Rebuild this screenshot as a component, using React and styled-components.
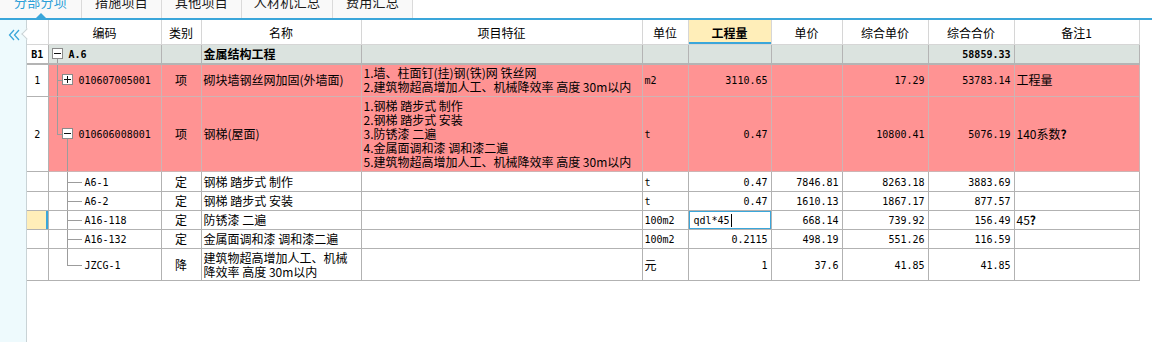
import React from "react"
import styled, { createGlobalStyle, css } from "styled-components"

const GlobalStyle = createGlobalStyle`
  html, body {
    margin: 0;
    padding: 0;
    background: #fff;
  }
  body {
    font-family: "Noto Sans CJK SC", "DejaVu Sans", sans-serif;
    font-size: 12px;
    color: #000;
  }
`

const colors = {
  blue: "#3aa6da",
  pane: "#eefafd",
  header: "#ffffff",
  headerLine: "#d6d6d6",
  group: "#dbe3df",
  groupLine: "#b4b4b4",
  red: "#ff9393",
  redLine: "#cdb4b4",
  plainLine: "#b2b2b2",
  current: "#ffeeb9",
  tree: "#9c9c9c",
}

const Page = styled.div`
  width: 1152px;
  height: 342px;
  display: flex;
  flex-direction: column;
  overflow: hidden;
`

const TabBar = styled.div`
  display: flex;
  height: 18px;
  flex-shrink: 0;
  border-bottom: 2px solid ${colors.blue};
  overflow: hidden;
`

const Tab = styled.div`
  position: relative;
  box-sizing: border-box;
  width: ${(p) => p.$w}px;
  border-right: 1px solid #dadada;
  background: #f9f9f9;
  display: flex;
  justify-content: center;
  font-size: 13px;
  line-height: 13px;
  color: ${(p) => (p.$active ? "#2b9fd8" : "#1a1a1a")};

  span {
    margin-top: -5px;
    letter-spacing: 0.3px;
  }

  ${(p) =>
    p.$active &&
    css`
      &::after {
        content: "";
        position: absolute;
        left: 50%;
        bottom: 0;
        transform: translateX(-50%);
        border-left: 5px solid transparent;
        border-right: 5px solid transparent;
        border-bottom: 5px solid ${colors.blue};
      }
    `}
`

const Main = styled.div`
  flex: 1;
  display: flex;
  min-height: 0;
`

const SidePane = styled.div`
  position: relative;
  width: 27px;
  flex-shrink: 0;
  background: ${colors.pane};
  border-right: 1px solid #c9d3d6;
  padding: 7px 0 0 8px;
  box-sizing: border-box;

  &::after {
    content: "";
    position: absolute;
    right: -5px;
    top: 10px;
    width: 7px;
    height: 7px;
    background: #fff;
    border-left: 1px solid #c9d3d6;
    border-bottom: 1px solid #c9d3d6;
    transform: rotate(45deg);
  }
`

const GridArea = styled.div`
  flex: 1;
  background: #fff;
`

const Table = styled.table`
  border-collapse: collapse;
  table-layout: fixed;
  width: 1112px;
`

const toneBg = {
  header: colors.header,
  group: colors.group,
  red: colors.red,
  plain: "#fff",
}

const toneLine = {
  header: colors.headerLine,
  group: colors.groupLine,
  red: colors.redLine,
  plain: colors.plainLine,
}

const HeadCell = styled.th`
  height: 24px;
  padding: 0;
  font-weight: ${(p) => (p.$focus ? 700 : 400)};
  font-size: 12px;
  text-align: center;
  background: ${(p) => (p.$focus ? colors.current : colors.header)};
  border-right: 1px solid ${colors.headerLine};
  border-bottom: 1px solid ${colors.headerLine};
  box-shadow: ${(p) => (p.$focus ? `inset 0 -2px 0 ${colors.blue}` : "none")};
`

const Cell = styled.td`
  position: relative;
  padding: 0 ${(p) => (p.$align === "right" ? 3 : 2)}px 0
    ${(p) => (p.$indent != null ? p.$indent : 2)}px;
  text-align: ${(p) => p.$align || "left"};
  vertical-align: middle;
  line-height: 14px;
  white-space: nowrap;
  overflow: hidden;
  background: ${(p) => toneBg[p.$tone]};
  border-right: 1px solid ${(p) => toneLine[p.$tone]};
  border-bottom: ${(p) => (p.$tone === "group" ? 2 : 1)}px solid
    ${(p) => toneLine[p.$tone]};
  font-weight: ${(p) => (p.$bold ? 700 : 400)};
`

const NoCell = styled(Cell)`
  text-align: center;
  padding: 0;
  background: ${(p) => (p.$current ? colors.current : "#fff")};
  box-shadow: ${(p) => (p.$current ? `inset -2px 0 0 ${colors.blue}` : "none")};
`

const EditCell = styled(Cell)`
  box-shadow: inset 0 0 0 1px ${colors.blue};
  padding-left: 5px;
`

const Row = styled.tr`
  height: ${(p) => p.$h}px;
`

const Mono = styled.span`
  font-family: "DejaVu Sans Mono", "Liberation Mono", monospace;
  font-size: 10px;
  letter-spacing: 0;
`

const Caret = styled.span`
  display: inline-block;
  width: 1px;
  height: 13px;
  margin-left: 1px;
  vertical-align: -3px;
  background: #000;
`

const Note = styled.span`
  b {
    font-weight: 700;
  }
`

const VLine = styled.span`
  position: absolute;
  left: ${(p) => p.$x}px;
  width: 1px;
  background: ${colors.tree};
  ${(p) => p.$span === "full" && "top: 0; bottom: 0;"}
  ${(p) => p.$span === "upper" && "top: 0; height: 50%;"}
  ${(p) => p.$span === "lower" && "top: calc(50% + 5px); bottom: 0;"}
`

const HLine = styled.span`
  position: absolute;
  left: ${(p) => p.$x}px;
  width: ${(p) => p.$w}px;
  top: 50%;
  height: 1px;
  background: ${colors.tree};
`

const Toggle = styled.span`
  position: absolute;
  left: ${(p) => p.$x}px;
  top: 50%;
  margin-top: -6px;
  width: 11px;
  height: 11px;
  box-sizing: border-box;
  border: 1px solid #8a8a8a;
  background: #fff;

  &::before,
  &::after {
    content: "";
    position: absolute;
    background: #111;
  }
  &::before {
    left: 1px;
    right: 1px;
    top: 4px;
    height: 1px;
  }
  &::after {
    display: ${(p) => (p.$open ? "none" : "block")};
    top: 1px;
    bottom: 1px;
    left: 4px;
    width: 1px;
  }
`

const ChevronsLeft = () => (
  <svg width="12" height="12" viewBox="0 0 12 12" fill="none">
    <polyline points="6,1 1.5,6 6,11" stroke={colors.blue} strokeWidth="1.3" />
    <polyline points="11,1 6.5,6 11,11" stroke={colors.blue} strokeWidth="1.3" />
  </svg>
)

const columns = [
  { key: "no", title: "", w: 21 },
  { key: "code", title: "编码", w: 113 },
  { key: "type", title: "类别", w: 40 },
  { key: "name", title: "名称", w: 160 },
  { key: "feat", title: "项目特征", w: 281 },
  { key: "unit", title: "单位", w: 46 },
  { key: "qty", title: "工程量", w: 83, focus: true },
  { key: "price", title: "单价", w: 71 },
  { key: "up", title: "综合单价", w: 86 },
  { key: "total", title: "综合合价", w: 86 },
  { key: "note", title: "备注1", w: 125 },
]

const rows = [
  {
    tone: "red",
    no: "1",
    code: "010607005001",
    tree: "item",
    type: "项",
    name: "砌块墙钢丝网加固(外墙面)",
    feat: ["1.墙、柱面钉(挂)钢(铁)网 铁丝网", "2.建筑物超高增加人工、机械降效率 高度 30m以内"],
    unit: "m2",
    qty: "3110.65",
    up: "17.29",
    total: "53783.14",
    note: "工程量",
    h: 33,
  },
  {
    tone: "red",
    no: "2",
    code: "010606008001",
    tree: "lastItem",
    type: "项",
    name: "钢梯(屋面)",
    feat: [
      "1.钢梯 踏步式 制作",
      "2.钢梯 踏步式 安装",
      "3.防锈漆 二遍",
      "4.金属面调和漆 调和漆二遍",
      "5.建筑物超高增加人工、机械降效率 高度 30m以内",
    ],
    unit: "t",
    qty: "0.47",
    up: "10800.41",
    total: "5076.19",
    note: "140系数",
    ask: true,
    h: 75,
  },
  {
    tone: "plain",
    code: "A6-1",
    tree: "leaf",
    type: "定",
    name: ["钢梯 踏步式 制作"],
    unit: "t",
    qty: "0.47",
    price: "7846.81",
    up: "8263.18",
    total: "3883.69",
    h: 20,
  },
  {
    tone: "plain",
    code: "A6-2",
    tree: "leaf",
    type: "定",
    name: ["钢梯 踏步式 安装"],
    unit: "t",
    qty: "0.47",
    price: "1610.13",
    up: "1867.17",
    total: "877.57",
    h: 19,
  },
  {
    tone: "plain",
    code: "A16-118",
    tree: "leaf",
    current: true,
    type: "定",
    name: ["防锈漆 二遍"],
    unit: "100m2",
    editing: "qdl*45",
    price: "668.14",
    up: "739.92",
    total: "156.49",
    note: "45",
    ask: true,
    h: 19,
  },
  {
    tone: "plain",
    code: "A16-132",
    tree: "leaf",
    type: "定",
    name: ["金属面调和漆 调和漆二遍"],
    unit: "100m2",
    qty: "0.2115",
    price: "498.19",
    up: "551.26",
    total: "116.59",
    h: 19,
  },
  {
    tone: "plain",
    code: "JZCG-1",
    tree: "lastLeaf",
    type: "降",
    name: ["建筑物超高增加人工、机械", "降效率 高度 30m以内"],
    unit: "元",
    qty: "1",
    price: "37.6",
    up: "41.85",
    total: "41.85",
    h: 32,
  },
]

const Lines = ({ items }) =>
  items.map((text, i) => (
    <React.Fragment key={i}>
      {i > 0 && <br />}
      {text}
    </React.Fragment>
  ))

const TreeGuide = ({ kind }) => {
  if (kind === "item" || kind === "lastItem") {
    return (
      <>
        <VLine $x={8} $span={kind === "item" ? "full" : "upper"} />
        <HLine $x={8} $w={5} />
        <Toggle $x={13} $open={kind === "lastItem"} />
        {kind === "lastItem" && <VLine $x={18} $span="lower" />}
      </>
    )
  }
  return (
    <>
      <VLine $x={18} $span={kind === "leaf" ? "full" : "upper"} />
      <HLine $x={18} $w={15} />
    </>
  )
}

const ItemRow = ({ row }) => {
  const t = row.tone
  const leaf = row.tree === "leaf" || row.tree === "lastLeaf"
  return (
    <Row $h={row.h}>
      <NoCell $tone="plain" $current={row.current}>
        <Mono>{row.no}</Mono>
      </NoCell>
      <Cell $tone={t} $indent={leaf ? 36 : 30}>
        <TreeGuide kind={row.tree} />
        <Mono>{row.code}</Mono>
      </Cell>
      <Cell $tone={t} $align="center">
        {row.type}
      </Cell>
      <Cell $tone={t}>{Array.isArray(row.name) ? <Lines items={row.name} /> : row.name}</Cell>
      <Cell $tone={t}>{row.feat && <Lines items={row.feat} />}</Cell>
      <Cell $tone={t}>{row.unit === "元" ? row.unit : <Mono>{row.unit}</Mono>}</Cell>
      {row.editing ? (
        <EditCell $tone={t}>
          <Mono>{row.editing}</Mono>
          <Caret />
        </EditCell>
      ) : (
        <Cell $tone={t} $align="right">
          <Mono>{row.qty}</Mono>
        </Cell>
      )}
      <Cell $tone={t} $align="right">
        <Mono>{row.price}</Mono>
      </Cell>
      <Cell $tone={t} $align="right">
        <Mono>{row.up}</Mono>
      </Cell>
      <Cell $tone={t} $align="right">
        <Mono>{row.total}</Mono>
      </Cell>
      <Cell $tone={t}>
        <Note>
          {row.note}
          {row.ask && <b>?</b>}
        </Note>
      </Cell>
    </Row>
  )
}

const tabs = [
  { label: "分部分项", w: 82, active: true },
  { label: "措施项目", w: 80 },
  { label: "其他项目", w: 80 },
  { label: "人材机汇总", w: 91 },
  { label: "费用汇总", w: 80 },
]

export default function App() {
  return (
    <Page>
      <GlobalStyle />
      <TabBar>
        {tabs.map((tab) => (
          <Tab key={tab.label} $w={tab.w} $active={tab.active}>
            <span>{tab.label}</span>
          </Tab>
        ))}
      </TabBar>
      <Main>
        <SidePane>
          <ChevronsLeft />
        </SidePane>
        <GridArea>
          <Table>
            <colgroup>
              {columns.map((c) => (
                <col key={c.key} style={{ width: c.w }} />
              ))}
            </colgroup>
            <thead>
              <tr>
                {columns.map((c) => (
                  <HeadCell key={c.key} $focus={c.focus}>
                    {c.title}
                  </HeadCell>
                ))}
              </tr>
            </thead>
            <tbody>
              <Row $h={19}>
                <NoCell $tone="group">
                  <Mono style={{ fontWeight: 700 }}>B1</Mono>
                </NoCell>
                <Cell $tone="group" $indent={20} $bold>
                  <Toggle $x={3} $open />
                  <VLine $x={8} $span="lower" />
                  <Mono>A.6</Mono>
                </Cell>
                <Cell $tone="group" />
                <Cell $tone="group" $bold>
                  金属结构工程
                </Cell>
                <Cell $tone="group" />
                <Cell $tone="group" />
                <Cell $tone="group" />
                <Cell $tone="group" />
                <Cell $tone="group" />
                <Cell $tone="group" $align="right" $bold>
                  <Mono>58859.33</Mono>
                </Cell>
                <Cell $tone="group" />
              </Row>
              {rows.map((row) => (
                <ItemRow key={row.code} row={row} />
              ))}
            </tbody>
          </Table>
        </GridArea>
      </Main>
    </Page>
  )
}
